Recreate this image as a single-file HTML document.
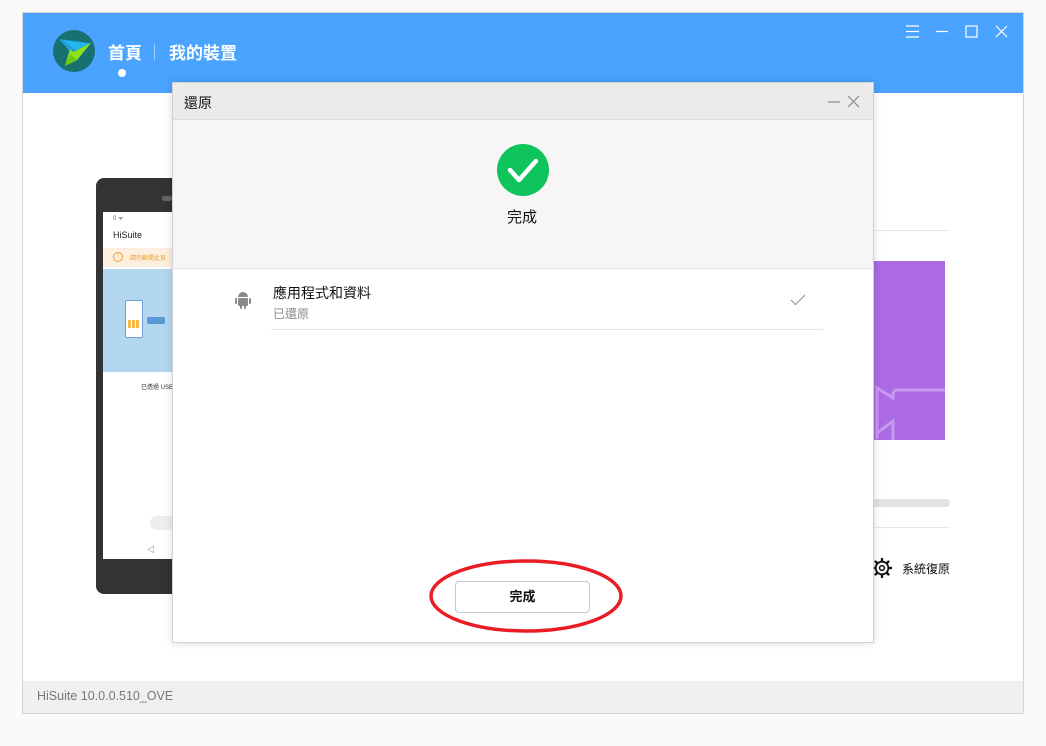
<!DOCTYPE html>
<html><head><meta charset="utf-8"><style>
*{margin:0;padding:0;box-sizing:border-box}
body{width:1046px;height:746px;background:#fafafa;position:relative;overflow:hidden;font-family:"Liberation Sans","Noto Sans CJK TC",sans-serif}
.abs{position:absolute}
</style></head><body>
<div class="abs" style="left:22px;top:12px;width:1002px;height:702px;border:1px solid #d4d4d4;background:#fff"></div>
<div class="abs" style="left:23px;top:13px;width:1000px;height:80px;background:#4aa3ff"></div>
<svg class="abs" style="left:53px;top:30px" width="42" height="42" viewBox="0 0 42 42">
<circle cx="21" cy="21" r="21" fill="#17716f"/>
<polygon points="6,9 38,13 24,30" fill="#1e9be0"/>
<polygon points="10,10 36,14 22,20" fill="#24b8f0"/>
<polygon points="9,11 17,19 12,36 24,30 38,13 20,22" fill="#8fe21b"/>
<polygon points="6,9 17,19 20,22" fill="#c4f04a"/>
<polygon points="12,36 24,30 17,24" fill="#6cc814"/>
</svg>
<div class="abs" style="left:108px;top:39px;color:#fff;font-size:17px;font-weight:bold">首頁</div>
<div class="abs" style="left:154px;top:44px;width:1px;height:16px;background:#9fd0ff"></div>
<div class="abs" style="left:169px;top:39px;color:#fff;font-size:17px;font-weight:bold">我的裝置</div>
<div class="abs" style="left:118px;top:69px;width:8px;height:8px;border-radius:50%;background:#fff"></div>
<svg class="abs" style="left:900px;top:22px" width="115" height="20" viewBox="0 0 115 20" stroke="#fff" stroke-width="1.2" fill="none">
<path d="M6 4h13M6 9.5h13M6 15h13"/><path d="M36 9.5h12"/><rect x="66" y="4" width="11" height="11"/><path d="M96 4l11 11M107 4l-11 11"/>
</svg>
<div class="abs" style="left:96px;top:178px;width:90px;height:416px;background:#333;border-radius:8px"></div>
<div class="abs" style="left:162px;top:196px;width:10px;height:5px;background:#666;border-radius:3px"></div>
<div class="abs" style="left:103px;top:212px;width:80px;height:347px;background:#fff"></div>
<div class="abs" style="left:113px;top:214px;font-size:6px;color:#666">0 ᯤ</div>
<div class="abs" style="left:113px;top:230px;font-size:9px;color:#222">HiSuite</div>
<div class="abs" style="left:103px;top:248px;width:80px;height:19px;background:#fdf0e0"></div>
<div class="abs" style="left:113px;top:252px;width:10px;height:10px;border:1px solid #f0a030;border-radius:50%;font-size:7px;color:#f0a030;text-align:center;line-height:8px">!</div>
<div class="abs" style="left:130px;top:253px;font-size:6px;color:#f0a030;white-space:nowrap">請勿斷開此頁</div>
<div class="abs" style="left:103px;top:269px;width:80px;height:103px;background:#b3d7f0"></div>
<div class="abs" style="left:125px;top:300px;width:18px;height:38px;background:#fff;border:1px solid #6fa0d8;border-radius:2px"></div>
<div class="abs" style="left:128px;top:320px;width:12px;height:8px;background:repeating-linear-gradient(90deg,#f7b84e 0 3px,transparent 3px 4px)"></div>
<div class="abs" style="left:147px;top:317px;width:18px;height:7px;background:#5b98d6;border-radius:2px"></div>
<div class="abs" style="left:141px;top:382px;font-size:6px;color:#333;white-space:nowrap">已透過 USB</div>
<div class="abs" style="left:150px;top:516px;width:30px;height:14px;background:#eee;border-radius:7px"></div>
<div class="abs" style="left:147px;top:544px;font-size:8px;color:#555">◁</div>
<div class="abs" style="left:873px;top:230px;width:77px;height:1px;background:#e8e8e8"></div>
<div class="abs" style="left:873px;top:261px;width:72px;height:179px;background:#ac6ae2;overflow:hidden">
<svg width="72" height="179" style="position:absolute;left:0;top:0"><path d="M4 178V127l16 10v-4a4 4 0 0 1 4-4h50" stroke="#c69af0" stroke-width="3" fill="none"/><path d="M4 172l16 -12v20" stroke="#c69af0" stroke-width="3" fill="none"/></svg></div>
<div class="abs" style="left:868px;top:499px;width:82px;height:8px;background:#e2e2e2;border-radius:4px"></div>
<div class="abs" style="left:873px;top:527px;width:77px;height:1px;background:#e8e8e8"></div>
<svg class="abs" style="left:871px;top:557px" width="22" height="22" viewBox="0 0 22 22"><g stroke="#111" stroke-width="2.4" stroke-linecap="round"><path d="M11 2v2M11 18v2M2 11h2M18 11h2M4.6 4.6l1.4 1.4M16 16l1.4 1.4M4.6 17.4l1.4-1.4M16 6l1.4-1.4"/></g><circle cx="11" cy="11" r="6.3" fill="none" stroke="#111" stroke-width="1.8"/><circle cx="11" cy="11" r="2.4" fill="none" stroke="#111" stroke-width="1.5"/></svg>
<div class="abs" style="left:902px;top:560px;font-size:12px;color:#111">系統復原</div>
<div class="abs" style="left:23px;top:681px;width:1000px;height:32px;background:#f0f0f0"></div>
<div class="abs" style="left:37px;top:689px;font-size:12.5px;color:#777">HiSuite 10.0.0.510_OVE</div>
<div class="abs" style="left:172px;top:82px;width:702px;height:561px;background:#fff;border:1px solid #d0d0d0;box-shadow:0 0 8px rgba(0,0,0,.15)"></div>
<div class="abs" style="left:173px;top:83px;width:700px;height:37px;background:#ebebeb;border-bottom:1px solid #dcdcdc"></div>
<div class="abs" style="left:184px;top:93px;font-size:14px;color:#111">還原</div>
<svg class="abs" style="left:826px;top:94px" width="36" height="16"><path d="M2 8h12" stroke="#888" stroke-width="1.2"/><path d="M22 2l11 11M33 2l-11 11" stroke="#888" stroke-width="1.2"/></svg>
<div class="abs" style="left:173px;top:120px;width:700px;height:149px;background:#f6f6f6;border-bottom:1px solid #e4e4e4"></div>
<svg class="abs" style="left:497px;top:144px" width="52" height="52"><circle cx="26" cy="26" r="26" fill="#10c45c"/><path d="M13 26l9 10 17-19" stroke="#fff" stroke-width="4.5" fill="none" stroke-linecap="round" stroke-linejoin="round"/></svg>
<div class="abs" style="left:507px;top:206px;font-size:15px;color:#111">完成</div>
<svg class="abs" style="left:234px;top:290px" width="18" height="20" viewBox="0 0 18 20" fill="#8a8a8a"><path d="M4 7a5 5 0 0 1 10 0z"/><rect x="4" y="8" width="10" height="8" rx="1"/><rect x="1" y="8" width="2" height="6" rx="1"/><rect x="15" y="8" width="2" height="6" rx="1"/><rect x="6" y="15" width="2" height="4" rx="1"/><rect x="10" y="15" width="2" height="4" rx="1"/></svg>
<div class="abs" style="left:273px;top:283px;font-size:14px;color:#111">應用程式和資料</div>
<div class="abs" style="left:273px;top:305px;font-size:12px;color:#888">已還原</div>
<svg class="abs" style="left:790px;top:294px" width="16" height="12"><path d="M1 6l4.5 4.5L15 1" stroke="#999" stroke-width="1.2" fill="none"/></svg>
<div class="abs" style="left:271px;top:329px;width:552px;height:1px;background:#e6e6e6"></div>
<div class="abs" style="left:455px;top:581px;width:135px;height:32px;border:1px solid #c8c8c8;border-radius:4px;background:#fff;text-align:center;line-height:30px;font-size:13px;font-weight:bold;color:#111">完成</div>
<svg class="abs" style="left:428px;top:558px" width="196" height="78"><ellipse cx="98" cy="38" rx="95" ry="35" fill="none" stroke="#ea1c24" stroke-width="3.5"/></svg>
</body></html>
